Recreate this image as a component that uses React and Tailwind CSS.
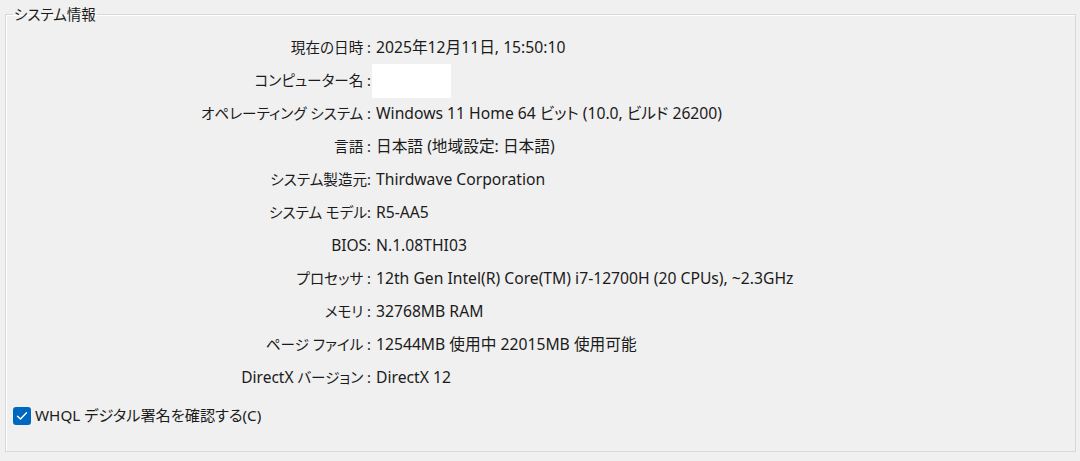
const ROWS = [
  ['現在の日時 :', '2025年12月11日, 15:50:10'],
  ['コンピューター名 :', null],
  ['オペレーティング システム :', 'Windows 11 Home 64 ビット (10.0, ビルド 26200)'],
  ['言語 :', '日本語 (地域設定: 日本語)'],
  ['システム製造元:', 'Thirdwave Corporation'],
  ['システム モデル:', 'R5-AA5'],
  ['BIOS:', 'N.1.08THI03'],
  ['プロセッサ :', '12th Gen Intel(R) Core(TM) i7-12700H (20 CPUs), ~2.3GHz'],
  ['メモリ :', '32768MB RAM'],
  ['ページ ファイル :', '12544MB 使用中 22015MB 使用可能'],
  ['DirectX バージョン :', 'DirectX 12'],
];

// latin runs in labels get the same size as the values, kana stays compact
function Label({ text }) {
  return text.split(/([A-Za-z]+)/).map((part, i) =>
    /^[A-Za-z]+$/.test(part) ? (
      <span key={i} className="text-[15.5px]">{part}</span>
    ) : (
      <span key={i}>{part}</span>
    )
  );
}

export default function App() {
  return (
    <div
      className="w-[1080px] h-[461px] bg-[#f0f0f0] text-[#1b1b1b] text-[14.6px] pt-[6px] pl-[5px] overflow-hidden [font-feature-settings:'palt']"
      style={{ fontFamily: '"Noto Sans", "Noto Sans CJK JP", sans-serif' }}
    >
      <fieldset className="w-[1071px] h-[446px] border border-[#d8d8d8] shadow-[inset_1px_1px_0_#ffffff] pl-[7px] m-0">
        <legend className="px-[1px] leading-[16px] text-[14.5px]">システム情報</legend>
        <div className="grid grid-cols-[358px_1fr] mt-[9px]">
          {ROWS.map(([label, value]) => (
            <div key={label} className="contents">
              <div className="h-[33px] flex items-center justify-end leading-none whitespace-pre">
                <Label text={label} />
              </div>
              <div className="h-[33px] flex items-center pl-[5px] leading-none text-[15.7px]">
                {value === null ? (
                  <div className="w-[79px] h-[34px] bg-white -ml-[4px]" />
                ) : (
                  value
                )}
              </div>
            </div>
          ))}
        </div>
        <label className="flex items-center gap-[4px] mt-[13px] leading-none text-[15.2px]">
          <span className="w-[18px] h-[18px] rounded-[3px] bg-[#0067c0] flex items-center justify-center">
            <svg width="12" height="10" viewBox="0 0 12 10" fill="none">
              <path d="M1.5 5.2 L4.5 8 L10.5 1.8" stroke="white" strokeWidth="1.4" strokeLinecap="round" strokeLinejoin="round" />
            </svg>
          </span>
          <span>WHQL デジタル署名を確認する(C)</span>
        </label>
      </fieldset>
    </div>
  );
}
